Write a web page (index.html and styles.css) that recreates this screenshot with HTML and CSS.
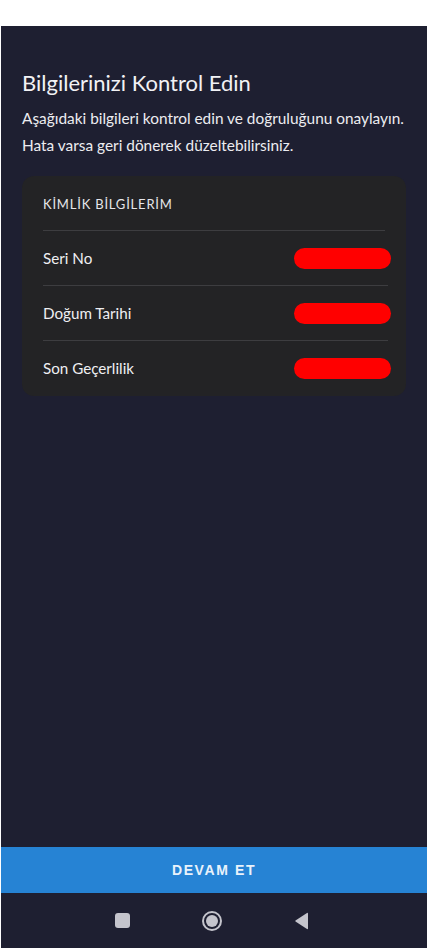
FILE: index.html
```html
<!DOCTYPE html>
<html>
  <head>
    <meta charset="utf-8">
    <link rel="stylesheet" href="styles.css">
  </head>
  <body>
    <div class="screen">
      <div class="content">
        <h1 class="title">Bilgilerinizi Kontrol Edin</h1>
        <p class="desc">Aşağıdaki bilgileri kontrol edin ve doğruluğunu onaylayın.<br>Hata varsa geri dönerek düzeltebilirsiniz.</p>

        <div class="card">
          <div class="card-head">KİMLİK BİLGİLERİM</div>
          <div class="row">
            <span>Seri No</span>
            <span class="redact"></span>
          </div>
          <div class="row">
            <span>Doğum Tarihi</span>
            <span class="redact"></span>
          </div>
          <div class="row">
            <span>Son Geçerlilik</span>
            <span class="redact"></span>
          </div>
        </div>
      </div>

      <div class="btn">DEVAM ET</div>

      <div class="navbar">
        <span class="nav-square"></span>
        <span class="nav-circle"></span>
        <svg class="nav-back" width="16" height="18" viewBox="0 0 16 18"><path d="M14 1.5 L14 16.5 Q14 17.5 13 17 L1.5 9.6 Q1 9 1.5 8.4 L13 1 Q14 0.5 14 1.5 Z" fill="#c4c4cc"/></svg>
      </div>
    </div>
  </body>
</html>
```

FILE: styles.css
```css
body {
  margin: 0;
  padding: 0;
  background-color: white;
  font-family: Lato, "Noto Sans", sans-serif;
  color: #f2f2f5;
}
.screen {
  margin: 26px 1px 0 1px;
  height: 922px;
  background-color: #1e1f31;
  display: flex;
  flex-direction: column;
}
.content {
  flex: 1;
  padding: 0 21px;
}
.title {
  margin: 43px 0 0 0;
  font-size: 22px;
  font-weight: normal;
  line-height: 28px;
  white-space: nowrap;
}
.desc {
  margin: 8px 0 0 0;
  font-size: 15.4px;
  line-height: 27px;
  color: #ececf0;
  white-space: nowrap;
}
.card {
  margin-top: 17px;
  background-color: #232325;
  border-radius: 12px;
  padding: 19px 18px 1px 21px;
}
.card-head {
  font-size: 13px;
  letter-spacing: 0.8px;
  color: #e6e6ea;
  line-height: 18px;
  padding: 0 0 17px 0;
  border-bottom: 1px solid #3d3d40;
  margin-right: 3px;
}
.row {
  display: flex;
  justify-content: space-between;
  align-items: center;
  height: 54px;
  font-size: 15.2px;
  color: #efeff2;
  border-bottom: 1px solid #3d3d40;
}
.row:last-child {
  border-bottom: none;
}
.redact {
  width: 97px;
  height: 21px;
  border-radius: 11px;
  background-color: #ff0000;
  margin-right: -3px;
}
.btn {
  height: 46px;
  background-color: #2683d4;
  color: #e9f2fb;
  font-family: "Liberation Sans", Arial, sans-serif;
  font-weight: bold;
  font-size: 14px;
  letter-spacing: 1.6px;
  display: flex;
  align-items: center;
  justify-content: center;
}
.navbar {
  height: 55px;
  display: flex;
  align-items: center;
  justify-content: center;
  gap: 72px;
  padding-right: 4px;
}
.nav-square {
  width: 15px;
  height: 15px;
  border-radius: 3px;
  background-color: #c4c4cc;
}
.nav-circle {
  width: 16px;
  height: 16px;
  border: 2px solid #c4c4cc;
  border-radius: 50%;
  position: relative;
}
.nav-circle::after {
  content: "";
  position: absolute;
  left: 2px;
  top: 2px;
  width: 12px;
  height: 12px;
  border-radius: 50%;
  background-color: #c4c4cc;
}
```
